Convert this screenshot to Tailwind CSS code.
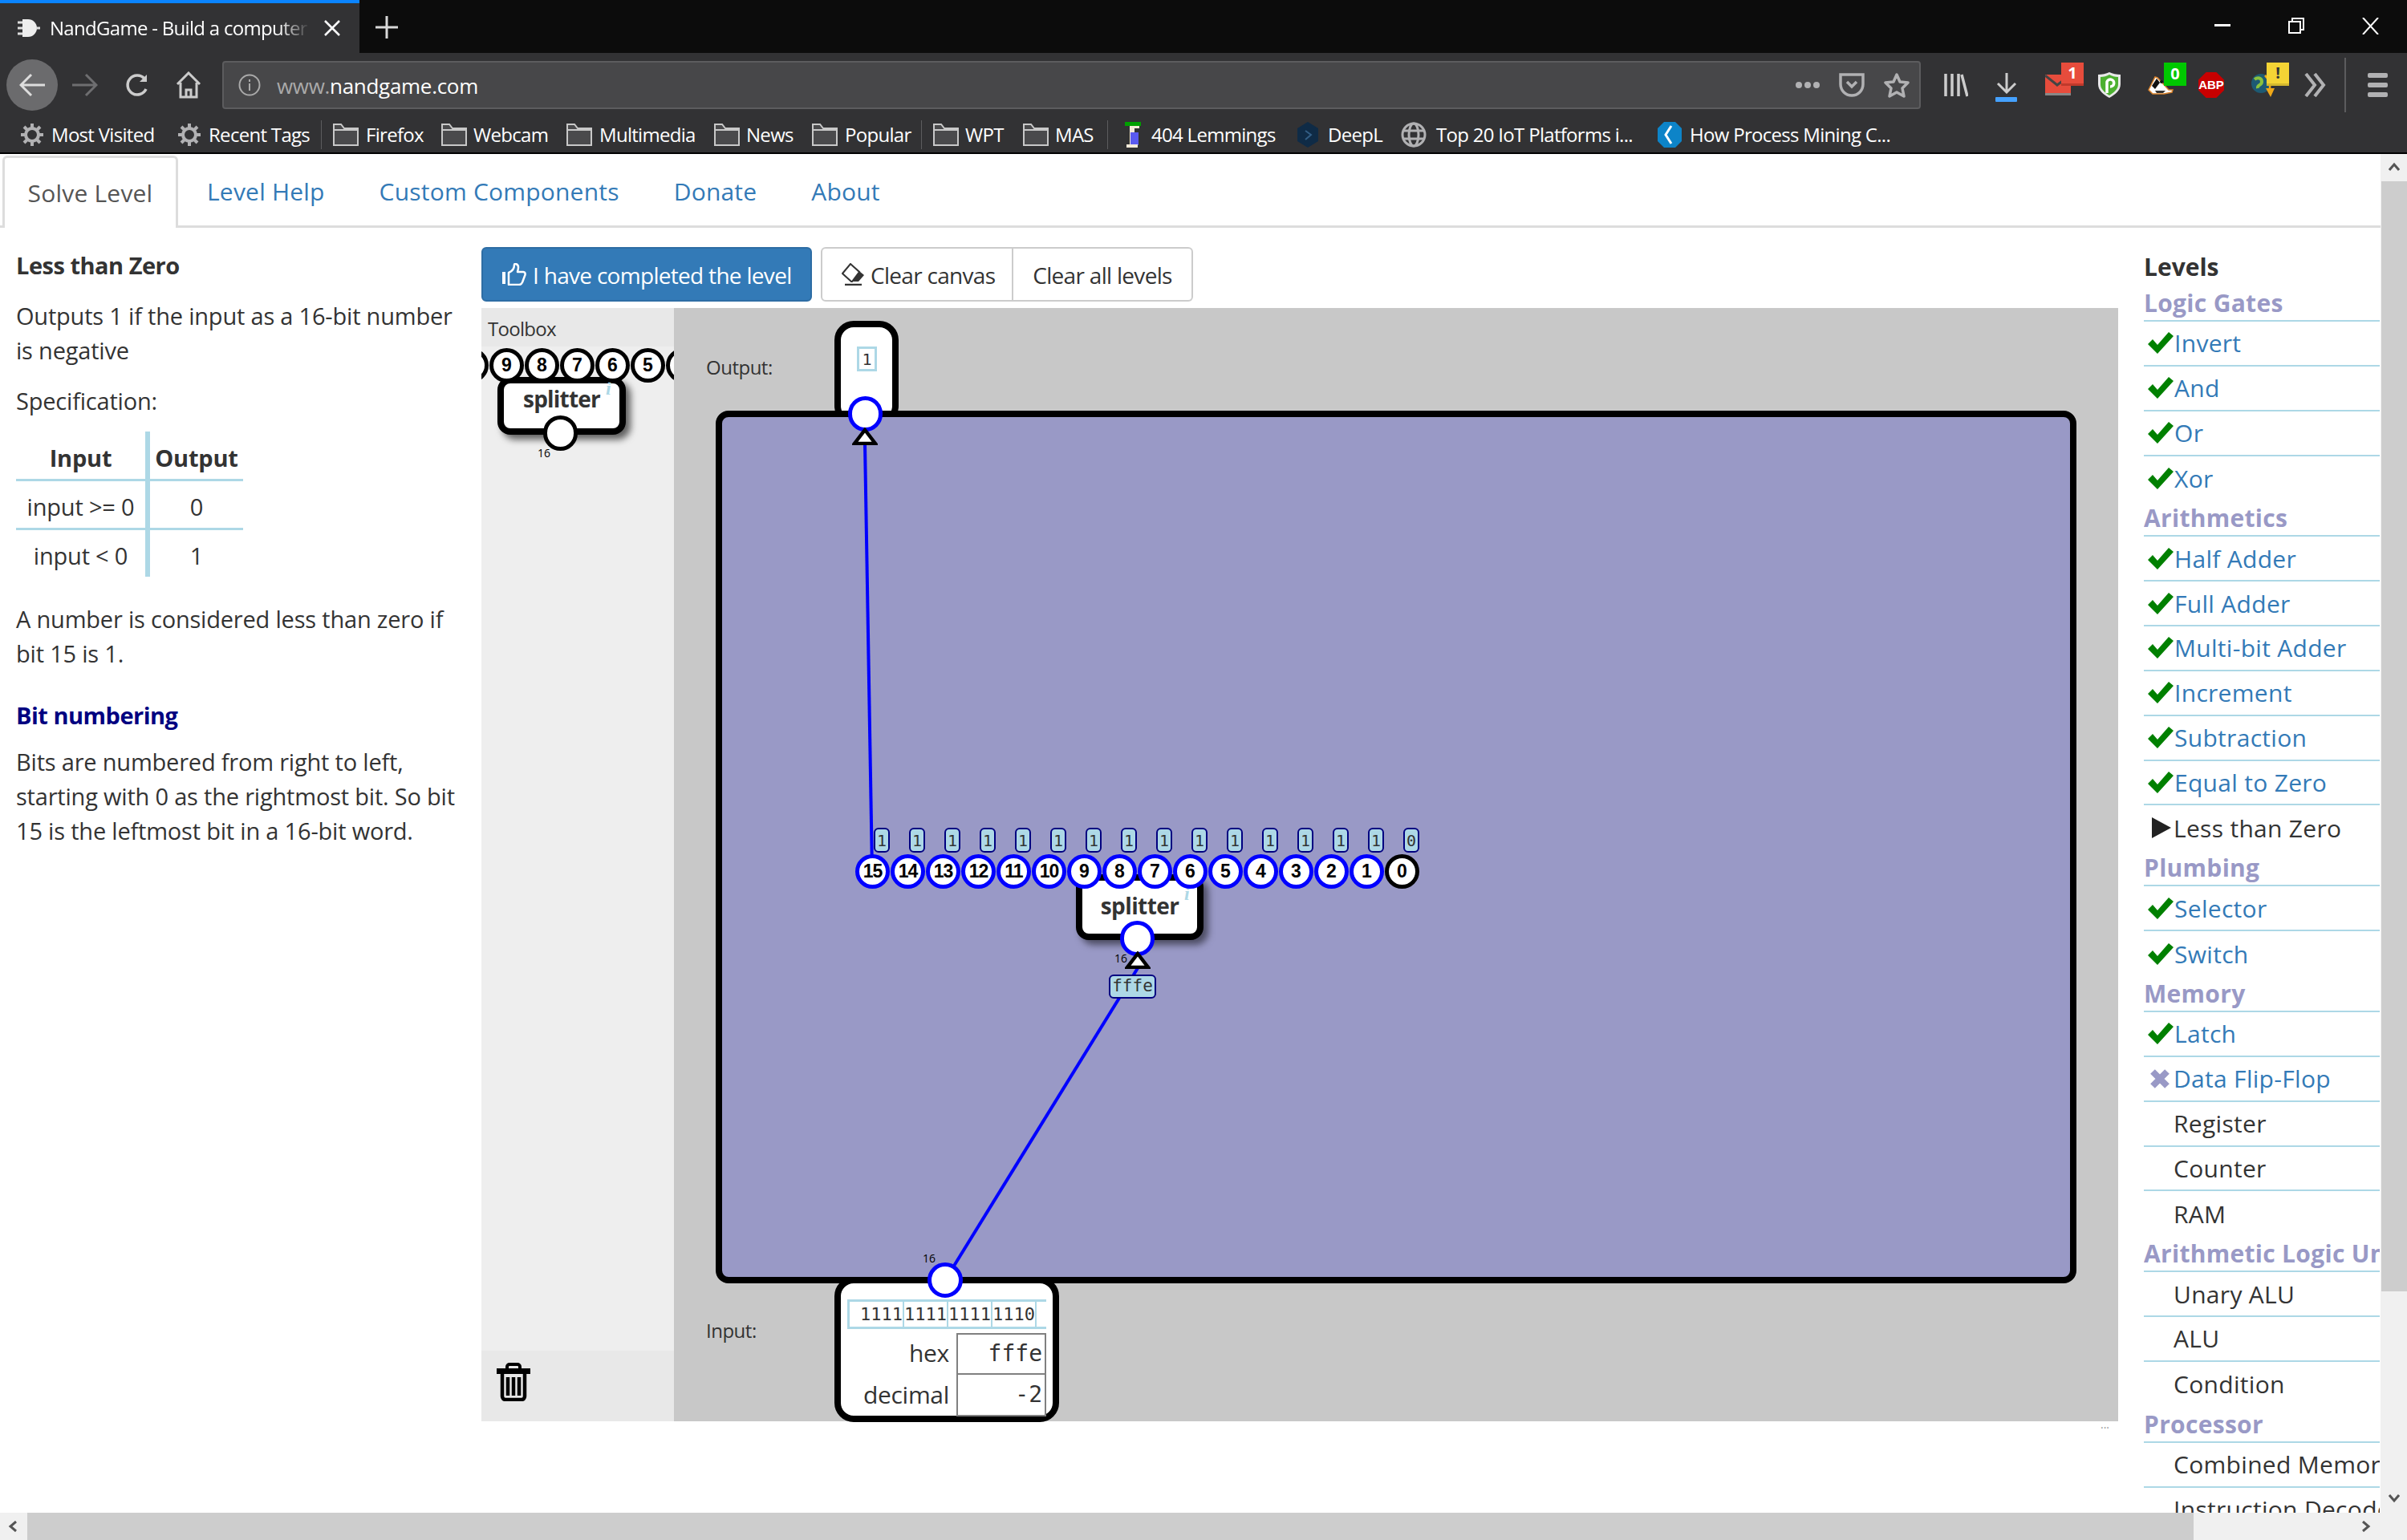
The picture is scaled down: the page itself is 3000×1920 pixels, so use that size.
<!DOCTYPE html>
<html lang="en">
<head>
<meta charset="UTF-8">
<title>NandGame - Build a computer from scratch</title>
<script src="https://cdn.jsdelivr.net/npm/@tailwindcss/browser@4"></script>
</head>
<body class="w-[3000px] h-[1920px] overflow-hidden bg-white font-['Open_Sans',sans-serif] text-[#333]">
<div class="flex flex-col w-[3000px] h-[1920px]">

  <!-- tab strip -->
  <div class="flex h-[66px] bg-[#0c0c0c] text-white shrink-0">
    <div class="w-[448px] bg-[#323234] border-t-4 border-[#0a84ff] flex items-center pl-[20px]">
      <svg class="w-[30px] h-[26px]" viewBox="0 0 30 26"><path d="M2 6h7M2 13h7M2 20h7" stroke="#ddd" stroke-width="3"/><path d="M8 2h7a11 11 0 0 1 0 22h-7z" fill="#eee"/><path d="M25 13h5" stroke="#ddd" stroke-width="3"/></svg>
      <span class="ml-[12px] w-[324px] overflow-hidden whitespace-nowrap text-[24px] tracking-[-0.7px] [mask-image:linear-gradient(to_right,black_88%,transparent)]">NandGame - Build a computer</span>
      <svg class="ml-[18px] w-[20px] h-[20px]" viewBox="0 0 20 20"><path d="M1 1l18 18M19 1L1 19" stroke="#fff" stroke-width="2.5"/></svg>
    </div>
    <svg class="ml-[20px] mt-[20px] w-[28px] h-[28px]" viewBox="0 0 28 28"><path d="M14 0v28M0 14h28" stroke="#d8d8d8" stroke-width="3"/></svg>
    <div class="flex-1"></div>
    <svg class="mt-[30px] mr-[72px] w-[20px] h-[3px]" viewBox="0 0 20 3"><path d="M0 1.5h20" stroke="#fff" stroke-width="3"/></svg>
    <svg class="mt-[22px] mr-[72px] w-[20px] h-[20px]" viewBox="0 0 20 20" fill="none" stroke="#fff" stroke-width="2"><rect x="1" y="5" width="14" height="14"/><path d="M5 5V1h14v14h-4"/></svg>
    <svg class="mt-[22px] mr-[35px] w-[21px] h-[21px]" viewBox="0 0 21 21"><path d="M1 0l19 21M20 0L1 21" stroke="#fff" stroke-width="2"/></svg>
  </div>

  <!-- nav toolbar -->
  <div class="flex items-center h-[80px] bg-[#323234] shrink-0 text-[#b1b1b3]">
    <div class="ml-[8px] w-[64px] h-[64px] rounded-full bg-[#6b6b6d] flex items-center justify-center">
      <svg class="w-[32px] h-[30px]" viewBox="0 0 32 30" fill="none" stroke="#ddd" stroke-width="3"><path d="M32 15H3M15 2L2 15l13 13"/></svg>
    </div>
    <svg class="ml-[18px] w-[32px] h-[30px]" viewBox="0 0 32 30" fill="none" stroke="#6e6e70" stroke-width="3"><path d="M0 15h29M17 2l13 13-13 13"/></svg>
    <svg class="ml-[34px] w-[30px] h-[30px]" viewBox="0 0 30 30" fill="none" stroke="#ccc" stroke-width="3.5"><path d="M26 20a12 12 0 1 1-2-13"/><path d="M27 2v9h-9" fill="#ccc" stroke="none"/></svg>
    <svg class="ml-[33px] w-[32px] h-[34px]" viewBox="0 0 32 34" fill="none" stroke="#ccc" stroke-width="3"><path d="M2 16L16 2l14 14M6 14v18h20V14M13 32v-9h6v9"/></svg>
    <div class="ml-[26px] w-[2117px] h-[60px] bg-[#474749] border-2 border-[#5c5c5e] rounded-[4px] flex items-center pl-[18px]">
      <svg class="w-[28px] h-[28px]" viewBox="0 0 28 28" fill="none" stroke="#aaa" stroke-width="2"><circle cx="14" cy="14" r="12.5"/><path d="M14 12v9M14 7v3"/></svg>
      <span class="ml-[20px] pt-[2px] text-[26px] tracking-[-0.3px] text-[#aaa]">www.<span class="text-white">nandgame.com</span></span>
      <div class="flex-1"></div>
      <div class="flex gap-[3px] mr-[24px]"><div class="w-[8px] h-[8px] rounded-full bg-[#b1b1b3]"></div><div class="w-[8px] h-[8px] rounded-full bg-[#b1b1b3]"></div><div class="w-[8px] h-[8px] rounded-full bg-[#b1b1b3]"></div></div>
      <svg class="w-[32px] h-[30px]" viewBox="0 0 32 30" fill="none" stroke="#b1b1b3" stroke-width="3.5"><path d="M2 2h28v12a14 14 0 0 1-28 0z"/><path d="M10 11l6 6 6-6"/></svg>
      <svg class="ml-[24px] mr-[12px] w-[32px] h-[32px]" viewBox="0 0 32 32" fill="none" stroke="#b1b1b3" stroke-width="3.5" stroke-linejoin="round"><path d="M16 3l4 9 10 1-7 7 2 10-9-5-9 5 2-10-7-7 10-1z"/></svg>
    </div>
    <svg class="ml-[29px] w-[30px] h-[30px]" viewBox="0 0 30 30" stroke="#ccc" stroke-width="3.5"><path d="M2 1v28M10 1v28M18 1v28M22 2l7 27"/></svg>
    <div class="relative ml-[34px] w-[28px] h-[30px]">
      <svg class="w-[28px] h-[26px]" viewBox="0 0 28 26" fill="none" stroke="#ccc" stroke-width="3"><path d="M14 0v24M3 13l11 11 11-11"/></svg>
      <div class="absolute left-0 bottom-[-6px] w-[27px] h-[6px] bg-[#45a1ff] rounded-[1px]"></div>
    </div>
    <div class="relative ml-[34px] w-[32px] h-[26px] bg-[#e74c3c] border-b-[3px] border-[#888]">
      <svg class="absolute top-[0px] left-0 w-[32px] h-[16px]" viewBox="0 0 32 16" fill="none" stroke="#444" stroke-width="3"><path d="M0 1l15 12L32 0"/></svg>
      <div class="absolute top-[-15px] left-[20px] w-[28px] h-[29px] bg-[#e74c3c] border-b-[3px] border-[#c0392b] text-white text-[20px] font-bold leading-[26px] text-center">1</div>
    </div>
    <svg class="ml-[34px] w-[28px] h-[32px]" viewBox="0 0 28 32"><path d="M14 0c4 2 9 3 14 3v12c0 8-7 13-14 17C7 28 0 23 0 15V3c5 0 10-1 14-3z" fill="#e8e8e8"/><path d="M14 3c3 2 7 3 11 3v9c0 6-5 10-11 14C8 25 3 21 3 15V6c4 0 8-1 11-3z" fill="#4cb030"/><path d="M11 26V12a4.500 4.500 0 1 1 4 6" fill="none" stroke="#fff" stroke-width="3.500"/></svg>
    <div class="relative ml-[34px] w-[32px] h-[26px]">
      <svg class="absolute top-0 left-0 w-[32px] h-[26px]" viewBox="0 0 32 26"><path d="M1 19L6 9l3-6 3 1 14 15h5l-1 3-10 2H6z" fill="#fff" stroke="#d9822b" stroke-width="1.500"/><path d="M5 14l6-9 4 5-6 8z" fill="#111"/><path d="M9 20h13l-3 3H11z" fill="#333"/><circle cx="17" cy="9" r="2" fill="#111"/></svg>
      <div class="absolute top-[-15px] left-[20px] w-[28px] h-[29px] bg-[#00c800] text-white text-[20px] font-bold leading-[28px] text-center">0</div>
    </div>
    <div class="ml-[31px] w-[32px] h-[32px] bg-[#c80000] [clip-path:polygon(30%_0,70%_0,100%_30%,100%_70%,70%_100%,30%_100%,0_70%,0_30%)] text-white text-[15px] font-bold flex items-center justify-center font-['Liberation_Sans',sans-serif]">ABP</div>
    <div class="relative ml-[34px] w-[32px] h-[30px]">
      <svg class="absolute left-0 top-0 w-[32px] h-[30px]" viewBox="0 0 32 30"><circle cx="12" cy="13" r="12" fill="#1d5a73"/><path d="M4 8c4-3 9-2 9 3s-6 3-5 8" stroke="#8ac23d" stroke-width="4" fill="none"/><path d="M17 3c5 5 7 10 6 18" stroke="#f0a818" stroke-width="2.500" fill="none"/><path d="M18 19h11l-5 11z" fill="#f0a818"/></svg>
      <div class="absolute top-[-13px] left-[19px] w-[28px] h-[29px] bg-[#f4d435] border-b-[3px] border-[#d4b82e] text-[#333] text-[20px] font-bold leading-[26px] text-center">!</div>
    </div>
    <svg class="ml-[34px] w-[27px] h-[30px]" viewBox="0 0 27 30" fill="none" stroke="#b1b1b3" stroke-width="4"><path d="M2 1l11 14L2 29M13 1l11 14-11 14"/></svg>
    <div class="ml-[23px] w-[2px] h-[68px] bg-[#5c5c5e]"></div>
    <div class="ml-[27px] flex flex-col gap-[6px] w-[25px]"><div class="h-[6px] bg-[#b1b1b3] rounded-[2px]"></div><div class="h-[6px] bg-[#b1b1b3] rounded-[2px]"></div><div class="h-[6px] bg-[#b1b1b3] rounded-[2px]"></div></div>
  </div>

  <!-- bookmarks -->
  <div class="flex items-center h-[44px] bg-[#323234] shrink-0 text-white text-[24px] tracking-[-0.7px] whitespace-nowrap">
    <svg class="ml-[26px] w-[28px] h-[28px]" viewBox="0 0 28 28" fill="none" stroke="#b1b1b3"><circle cx="14" cy="14" r="8" stroke-width="4"/><path d="M14 0v6M14 22v6M0 14h6M22 14h6M4 4l4 4M20 20l4 4M24 4l-4 4M8 20l-4 4" stroke-width="4"/></svg>
    <span class="ml-[10px] w-[132px]">Most Visited</span>
    <svg class="ml-[26px] w-[28px] h-[28px]" viewBox="0 0 28 28" fill="none" stroke="#b1b1b3"><circle cx="14" cy="14" r="8" stroke-width="4"/><path d="M14 0v6M14 22v6M0 14h6M22 14h6M4 4l4 4M20 20l4 4M24 4l-4 4M8 20l-4 4" stroke-width="4"/></svg>
    <span class="ml-[10px] w-[125px]">Recent Tags</span>
    <div class="ml-[15px] w-[1px] h-[36px] bg-[#5c5c5e]"></div>
    <svg class="ml-[14px] w-[32px] h-[28px]" viewBox="0 0 32 28" fill="#4a4a4c" stroke="#c8c8c8" stroke-width="2"><path d="M1 27V1h9l4 5h17v21z"/><path d="M1 8h30" fill="none"/></svg>
    <span class="ml-[9px] w-[71px]">Firefox</span>
    <svg class="ml-[23px] w-[32px] h-[28px]" viewBox="0 0 32 28" fill="#4a4a4c" stroke="#c8c8c8" stroke-width="2"><path d="M1 27V1h9l4 5h17v21z"/><path d="M1 8h30" fill="none"/></svg>
    <span class="ml-[8px] w-[92px]">Webcam</span>
    <svg class="ml-[24px] w-[32px] h-[28px]" viewBox="0 0 32 28" fill="#4a4a4c" stroke="#c8c8c8" stroke-width="2"><path d="M1 27V1h9l4 5h17v21z"/><path d="M1 8h30" fill="none"/></svg>
    <span class="ml-[9px] w-[119px]">Multimedia</span>
    <svg class="ml-[24px] w-[32px] h-[28px]" viewBox="0 0 32 28" fill="#4a4a4c" stroke="#c8c8c8" stroke-width="2"><path d="M1 27V1h9l4 5h17v21z"/><path d="M1 8h30" fill="none"/></svg>
    <span class="ml-[8px] w-[59px]">News</span>
    <svg class="ml-[23px] w-[32px] h-[28px]" viewBox="0 0 32 28" fill="#4a4a4c" stroke="#c8c8c8" stroke-width="2"><path d="M1 27V1h9l4 5h17v21z"/><path d="M1 8h30" fill="none"/></svg>
    <span class="ml-[9px] w-[81px]">Popular</span>
    <div class="ml-[14px] w-[1px] h-[36px] bg-[#5c5c5e]"></div>
    <svg class="ml-[14px] w-[32px] h-[28px]" viewBox="0 0 32 28" fill="#4a4a4c" stroke="#c8c8c8" stroke-width="2"><path d="M1 27V1h9l4 5h17v21z"/><path d="M1 8h30" fill="none"/></svg>
    <span class="ml-[8px] w-[49px]">WPT</span>
    <svg class="ml-[23px] w-[32px] h-[28px]" viewBox="0 0 32 28" fill="#4a4a4c" stroke="#c8c8c8" stroke-width="2"><path d="M1 27V1h9l4 5h17v21z"/><path d="M1 8h30" fill="none"/></svg>
    <span class="ml-[8px] w-[50px]">MAS</span>
    <div class="ml-[15px] w-[1px] h-[36px] bg-[#5c5c5e]"></div>
    <svg class="ml-[19px] w-[24px] h-[32px]" viewBox="0 0 24 32"><rect x="2" width="20" height="5" fill="#00a000"/><rect x="8" y="5" width="6" height="24" fill="#f4ead8"/><rect x="14" y="5" width="6" height="3" fill="#f4ead8"/><rect x="9" y="13" width="10" height="16" fill="#5a5af0"/><rect x="4" y="28" width="14" height="4" fill="#f4ead8"/></svg>
    <span class="ml-[11px] w-[156px]">404 Lemmings</span>
    <svg class="ml-[26px] w-[26px] h-[32px]" viewBox="0 0 26 32"><path d="M13 0l13 8v16l-13 8-13-8V8z" fill="#0f2b46"/><path d="M10 11l7 5-7 6" fill="none" stroke="#335e85" stroke-width="2"/></svg>
    <span class="ml-[12px] w-[67px]">DeepL</span>
    <svg class="ml-[24px] w-[32px] h-[32px]" viewBox="0 0 32 32" fill="none" stroke="#b1b1b3" stroke-width="3"><circle cx="16" cy="16" r="14"/><ellipse cx="16" cy="16" rx="6" ry="14"/><path d="M3 11h26M3 21h26"/></svg>
    <span class="ml-[12px] w-[247px]">Top 20 IoT Platforms i...</span>
    <svg class="ml-[29px] w-[30px] h-[32px]" viewBox="0 0 30 32"><path d="M8 0h14l8 8v16l-8 8H8l-8-8V8z" fill="#0d84c8"/><path d="M17 5l-7 11 7 11" fill="none" stroke="#fff" stroke-width="3"/></svg>
    <span class="ml-[10px]">How Process Mining C...</span>
  </div>
  <div class="h-[2px] bg-black shrink-0"></div>

  <!-- page with scrollbars -->
  <div class="flex flex-1 min-h-0">
    <div class="flex flex-col flex-1 min-w-0">
      <div class="flex-1 min-h-0 overflow-hidden">

        <!-- page tabs -->
        <div class="flex h-[92px] pl-[3px] pt-[2px] border-b-[3px] border-[#ddd] text-[#337ab7] text-[30px] tracking-[0.2px]">
          <div class="w-[219px] h-[90px] border-[3px] border-b-0 border-[#ddd] rounded-t-[6px] bg-white text-[#555] flex items-center justify-center">Solve Level</div>
          <div class="ml-[36px] h-[87px] flex items-center pt-[2px]">Level Help</div>
          <div class="ml-[68px] h-[87px] flex items-center pt-[2px]">Custom Components</div>
          <div class="ml-[68px] h-[87px] flex items-center pt-[2px]">Donate</div>
          <div class="ml-[68px] h-[87px] flex items-center pt-[2px]">About</div>
        </div>

        <div class="flex">
          <!-- left text column -->
          <div class="w-[600px] pl-[20px] pr-[20px] pt-[27px] text-[29px] leading-[43px] tracking-[-0.2px]">
            <h2 class="font-bold h-[40px] leading-[40px] mb-[21px] tracking-[-0.5px]">Less than Zero</h2>
            <p class="mb-[20px]">Outputs 1 if the input as a 16-bit number<br>is negative</p>
            <p class="mb-[17px]">Specification:</p>
            <table class="border-collapse mb-[31px]">
              <tr class="h-[60px]">
                <th class="w-[164px] pt-[6px] border-b-[3px] border-r-[6px] border-[#add8e6] font-bold">Input</th>
                <th class="w-[119px] pt-[6px] border-b-[3px] border-[#add8e6] font-bold">Output</th>
              </tr>
              <tr class="h-[61px]">
                <td class="text-center pt-[5px] border-b-[3px] border-r-[6px] border-[#add8e6]">input &gt;= 0</td>
                <td class="text-center pt-[5px] border-b-[3px] border-[#add8e6]">0</td>
              </tr>
              <tr class="h-[60px]">
                <td class="text-center pt-[5px] border-r-[6px] border-[#add8e6]">input &lt; 0</td>
                <td class="text-center pt-[5px]">1</td>
              </tr>
            </table>
            <p class="mb-[36px]">A number is considered less than zero if<br>bit 15 is 1.</p>
            <h3 class="font-bold text-[#000080] h-[40px] leading-[40px] mb-[16px] tracking-[-0.5px]">Bit numbering</h3>
            <p>Bits are numbered from right to left,<br>starting with 0 as the rightmost bit. So bit<br>15 is the leftmost bit in a 16-bit word.</p>
          </div>

          <!-- center column -->
          <div class="w-[2040px] pt-[24px]">
            <div class="flex h-[68px] text-[28px] tracking-[-0.7px]">
              <button class="w-[412px] rounded-[6px] bg-[#337ab7] border-2 border-[#2e6da4] text-white flex items-center pl-[24px] pt-[2px]">
                <svg class="w-[30px] h-[28px] mr-[8px] mb-[2px]" viewBox="0 0 30 28" fill="none" stroke="#fff" stroke-width="2.500" stroke-linejoin="round"><path d="M2 11v15" stroke-width="4"/><path d="M8 12c5-2 7-5 7-10 0-2 5-1 5 3 0 3-1 5-1 6h7c3 0 3 3 2 5l-3 8c-1 2-2 3-4 3H8z"/></svg>
                I have completed the level
              </button>
              <button class="ml-[11px] w-[240px] rounded-l-[6px] border-2 border-[#ccc] flex items-center pl-[24px] pt-[2px]">
                <svg class="w-[30px] h-[28px] mr-[6px] mb-[2px]" viewBox="0 0 30 28"><path d="M11 1l17 14-7 8H12L1 13z" fill="#333"/><path d="M1 13L11 1l11 10-9 12h-1z" fill="#fff" stroke="#333" stroke-width="2"/><path d="M4 27h21" stroke="#333" stroke-width="2.500"/></svg>
                Clear canvas
              </button>
              <button class="w-[224px] rounded-r-[6px] border-2 border-l-0 border-[#ccc] pt-[2px]">Clear all levels</button>
            </div>

            <!-- canvas -->
            <div class="mt-[8px] flex h-[1388px] relative">
              <!-- toolbox -->
              <div class="w-[240px] flex flex-col bg-[#eee]">
                <div class="h-[48px] bg-[#e8e8e8] pl-[8px] text-[24px] leading-[52px] tracking-[-0.7px]">Toolbox</div>
                <div class="flex-1 relative overflow-hidden">
                  <div class="absolute left-[20px] top-[38px] w-[160px] h-[72px] bg-white border-[8px] border-black rounded-[16px] shadow-[6px_6px_8px_rgba(0,0,0,0.6)] text-center font-bold text-[28px] leading-[38px] tracking-[-0.8px]">splitter</div>
                  <span class="absolute left-[155px] top-[38px] text-[#add8e6] font-['Liberation_Serif',serif] italic font-bold text-[24px] leading-[28px]">i</span>
                  <div class="absolute left-[-34px] top-[2px] flex gap-[1px]">
                    <div class="w-[43px] h-[43px] rounded-full bg-white border-[5px] border-black flex items-center justify-center font-['Liberation_Sans',sans-serif] font-bold text-[23px] tracking-[-1px] text-black">10</div>
                    <div class="w-[43px] h-[43px] rounded-full bg-white border-[5px] border-black flex items-center justify-center font-['Liberation_Sans',sans-serif] font-bold text-[23px] text-black">9</div>
                    <div class="w-[43px] h-[43px] rounded-full bg-white border-[5px] border-black flex items-center justify-center font-['Liberation_Sans',sans-serif] font-bold text-[23px] text-black">8</div>
                    <div class="w-[43px] h-[43px] rounded-full bg-white border-[5px] border-black flex items-center justify-center font-['Liberation_Sans',sans-serif] font-bold text-[23px] text-black">7</div>
                    <div class="w-[43px] h-[43px] rounded-full bg-white border-[5px] border-black flex items-center justify-center font-['Liberation_Sans',sans-serif] font-bold text-[23px] text-black">6</div>
                    <div class="w-[43px] h-[43px] rounded-full bg-white border-[5px] border-black flex items-center justify-center font-['Liberation_Sans',sans-serif] font-bold text-[23px] text-black">5</div>
                    <div class="w-[43px] h-[43px] rounded-full bg-white border-[5px] border-black flex items-center justify-center font-['Liberation_Sans',sans-serif] font-bold text-[23px] text-black">4</div>
                  </div>
                  <div class="absolute left-[77px] top-[86px] w-[43px] h-[44px] rounded-full bg-white border-[5px] border-black"></div>
                  <span class="absolute left-[70px] top-[124px] text-[14px] leading-[18px] text-black">16</span>
                </div>
                <div class="h-[88px] bg-[#e8e8e8] flex items-start pl-[19px] pt-[15px]">
                  <svg class="w-[42px] h-[48px]" viewBox="0 0 42 48" fill="none" stroke="#000"><path d="M0 10.500h42" stroke-width="7"/><path d="M13 8V5a3 3 0 0 1 3-3h10a3 3 0 0 1 3 3v3" stroke-width="4"/><path d="M7 13v29a4 4 0 0 0 4 4h20a4 4 0 0 0 4-4V13" stroke-width="4.500"/><path d="M14 18v23M21 18v23M28 18v23" stroke-width="4.500"/></svg>
                </div>
              </div>

              <!-- board -->
              <div class="w-[1800px] bg-[#c8c8c8] relative">
                <span class="absolute left-[40px] top-[60px] text-[24px] leading-[28px] tracking-[-0.5px]">Output:</span>
                <span class="absolute left-[40px] top-[1261px] text-[24px] leading-[28px] tracking-[-0.5px]">Input:</span>

                <!-- output box -->
                <div class="absolute left-[200px] top-[16px] w-[80px] h-[130px] bg-white border-[8px] border-black rounded-[24px]"></div>
                <div class="absolute left-[228px] top-[48px] w-[25px] h-[31px] border-[3px] border-[#add8e6] flex items-center justify-center font-['DejaVu_Sans_Mono',monospace] text-[20px]">1</div>

                <div class="absolute left-[52px] top-[128px] w-[1696px] h-[1088px] bg-[#9999c6] border-[8px] border-black rounded-[16px]"></div>

                <!-- input box -->
                <div class="absolute left-[200px] top-[1208px] w-[280px] h-[181px] bg-white border-[8px] border-black rounded-[24px] pt-[20px] px-[8px]">
                  <div class="flex h-[37px] border-[3px] border-r-0 border-[#add8e6] pl-[13px] font-['DejaVu_Sans_Mono',monospace] text-[22px] leading-[31px]">
                    <span class="w-[55px] border-r-2 border-[#add8e6]">1111</span>
                    <span class="w-[55px] border-r-2 border-[#add8e6]">1111</span>
                    <span class="w-[55px] border-r-2 border-[#add8e6]">1111</span>
                    <span class="w-[55px] border-r-2 border-[#add8e6]">1110</span>
                  </div>
                  <div class="flex mt-[5px] h-[52px]">
                    <span class="w-[127px] text-right text-[30px] leading-[50px] tracking-[-0.3px]">hex</span>
                    <span class="ml-[9px] w-[112px] border-2 border-[#808080] text-right pr-[3px] font-['DejaVu_Sans_Mono',monospace] text-[28px] leading-[48px]">fffe</span>
                  </div>
                  <div class="flex h-[52px]">
                    <span class="w-[127px] text-right text-[30px] leading-[50px] tracking-[-0.3px]">decimal</span>
                    <span class="ml-[9px] w-[112px] border-2 border-t-0 border-[#808080] text-right pr-[3px] font-['DejaVu_Sans_Mono',monospace] text-[28px] leading-[50px]">-2</span>
                  </div>
                </div>

                <!-- wires -->
                <svg class="absolute left-0 top-0 w-[1800px] h-[1388px]" viewBox="0 0 1800 1388" stroke="#0000ff" stroke-width="4"><path d="M247 702L238 169"/><path d="M338 1212L578 823"/></svg>

                <!-- output connector -->
                <div class="absolute left-[217px] top-[110px] w-[43px] h-[44px] rounded-full bg-white border-[5px] border-[#0000ff]"></div>
                <svg class="absolute left-[222px] top-[149px] w-[32px] h-[22px]" viewBox="0 0 32 22"><path d="M16 3L29 20H3z" fill="#fff" stroke="#000" stroke-width="4.500"/></svg>

                <!-- splitter -->
                <div class="absolute left-[501px] top-[706px] w-[159px] h-[82px] bg-white border-[8px] border-black rounded-[16px] shadow-[6px_6px_8px_rgba(0,0,0,0.5)] text-center font-bold text-[28px] leading-[38px] pt-[12px] tracking-[-0.6px]">splitter</div>
                <span class="absolute left-[636px] top-[716px] text-[#add8e6] font-['Liberation_Serif',serif] italic font-bold text-[24px] leading-[28px]">i</span>

                <!-- bit values -->
                <div class="absolute left-[249px] top-[648px] flex gap-[24px] font-['DejaVu_Sans_Mono',monospace] text-[20px]">
                  <div class="w-[20px] h-[31px] bg-[#add8e6] border-2 border-[#000080] rounded-[6px] flex items-center justify-center">1</div>
                  <div class="w-[20px] h-[31px] bg-[#add8e6] border-2 border-[#000080] rounded-[6px] flex items-center justify-center">1</div>
                  <div class="w-[20px] h-[31px] bg-[#add8e6] border-2 border-[#000080] rounded-[6px] flex items-center justify-center">1</div>
                  <div class="w-[20px] h-[31px] bg-[#add8e6] border-2 border-[#000080] rounded-[6px] flex items-center justify-center">1</div>
                  <div class="w-[20px] h-[31px] bg-[#add8e6] border-2 border-[#000080] rounded-[6px] flex items-center justify-center">1</div>
                  <div class="w-[20px] h-[31px] bg-[#add8e6] border-2 border-[#000080] rounded-[6px] flex items-center justify-center">1</div>
                  <div class="w-[20px] h-[31px] bg-[#add8e6] border-2 border-[#000080] rounded-[6px] flex items-center justify-center">1</div>
                  <div class="w-[20px] h-[31px] bg-[#add8e6] border-2 border-[#000080] rounded-[6px] flex items-center justify-center">1</div>
                  <div class="w-[20px] h-[31px] bg-[#add8e6] border-2 border-[#000080] rounded-[6px] flex items-center justify-center">1</div>
                  <div class="w-[20px] h-[31px] bg-[#add8e6] border-2 border-[#000080] rounded-[6px] flex items-center justify-center">1</div>
                  <div class="w-[20px] h-[31px] bg-[#add8e6] border-2 border-[#000080] rounded-[6px] flex items-center justify-center">1</div>
                  <div class="w-[20px] h-[31px] bg-[#add8e6] border-2 border-[#000080] rounded-[6px] flex items-center justify-center">1</div>
                  <div class="w-[20px] h-[31px] bg-[#add8e6] border-2 border-[#000080] rounded-[6px] flex items-center justify-center">1</div>
                  <div class="w-[20px] h-[31px] bg-[#add8e6] border-2 border-[#000080] rounded-[6px] flex items-center justify-center">1</div>
                  <div class="w-[20px] h-[31px] bg-[#add8e6] border-2 border-[#000080] rounded-[6px] flex items-center justify-center">1</div>
                  <div class="w-[20px] h-[31px] bg-[#add8e6] border-2 border-[#000080] rounded-[6px] flex items-center justify-center">0</div>
                </div>

                <!-- bit pins -->
                <div class="absolute left-[226px] top-[681px] flex gap-[1px] font-['Liberation_Sans',sans-serif] font-bold text-[23px] text-black">
                  <div class="w-[43px] h-[43px] rounded-full bg-white border-[5px] border-[#0000ff] flex items-center justify-center tracking-[-1px]">15</div>
                  <div class="w-[43px] h-[43px] rounded-full bg-white border-[5px] border-[#0000ff] flex items-center justify-center tracking-[-1px]">14</div>
                  <div class="w-[43px] h-[43px] rounded-full bg-white border-[5px] border-[#0000ff] flex items-center justify-center tracking-[-1px]">13</div>
                  <div class="w-[43px] h-[43px] rounded-full bg-white border-[5px] border-[#0000ff] flex items-center justify-center tracking-[-1px]">12</div>
                  <div class="w-[43px] h-[43px] rounded-full bg-white border-[5px] border-[#0000ff] flex items-center justify-center tracking-[-1px]">11</div>
                  <div class="w-[43px] h-[43px] rounded-full bg-white border-[5px] border-[#0000ff] flex items-center justify-center tracking-[-1px]">10</div>
                  <div class="w-[43px] h-[43px] rounded-full bg-white border-[5px] border-[#0000ff] flex items-center justify-center">9</div>
                  <div class="w-[43px] h-[43px] rounded-full bg-white border-[5px] border-[#0000ff] flex items-center justify-center">8</div>
                  <div class="w-[43px] h-[43px] rounded-full bg-white border-[5px] border-[#0000ff] flex items-center justify-center">7</div>
                  <div class="w-[43px] h-[43px] rounded-full bg-white border-[5px] border-[#0000ff] flex items-center justify-center">6</div>
                  <div class="w-[43px] h-[43px] rounded-full bg-white border-[5px] border-[#0000ff] flex items-center justify-center">5</div>
                  <div class="w-[43px] h-[43px] rounded-full bg-white border-[5px] border-[#0000ff] flex items-center justify-center">4</div>
                  <div class="w-[43px] h-[43px] rounded-full bg-white border-[5px] border-[#0000ff] flex items-center justify-center">3</div>
                  <div class="w-[43px] h-[43px] rounded-full bg-white border-[5px] border-[#0000ff] flex items-center justify-center">2</div>
                  <div class="w-[43px] h-[43px] rounded-full bg-white border-[5px] border-[#0000ff] flex items-center justify-center">1</div>
                  <div class="w-[43px] h-[43px] rounded-full bg-white border-[5px] border-black flex items-center justify-center">0</div>
                </div>

                <!-- splitter input -->
                <div class="absolute left-[556px] top-[764px] w-[43px] h-[44px] rounded-full bg-white border-[5px] border-[#0000ff]"></div>
                <svg class="absolute left-[562px] top-[802px] w-[32px] h-[22px]" viewBox="0 0 32 22"><path d="M16 3L29 20H3z" fill="#fff" stroke="#000" stroke-width="4.500"/></svg>
                <span class="absolute left-[549px] top-[802px] text-[14px] leading-[18px] text-black">16</span>
                <div class="absolute left-[542px] top-[831px] w-[59px] h-[30px] bg-[#add8e6] border-2 border-[#000080] rounded-[6px] flex items-center justify-center font-['DejaVu_Sans_Mono',monospace] text-[21px]">fffe</div>

                <!-- board input -->
                <div class="absolute left-[316px] top-[1190px] w-[44px] h-[44px] rounded-full bg-white border-[5px] border-[#0000ff]"></div>
                <span class="absolute left-[310px] top-[1176px] text-[14px] leading-[18px] text-black">16</span>
              </div>
              <span class="absolute left-[2018px] top-[1387px] text-[14px] leading-[10px] text-[#999]">...</span>
            </div>
          </div>

          <!-- levels -->
          <div class="ml-[32px] w-[294px] pt-[29px] overflow-hidden whitespace-nowrap text-[30px] tracking-[0.3px]">
            <h3 class="h-[43px] leading-[40px] font-bold tracking-normal">Levels</h3>
            <h4 class="h-[45px] leading-[44px] font-bold text-[#9999c6] border-b-2 border-[#add8e6]">Logic Gates</h4>
            <a class="flex items-center h-[55.85px] border-b-2 border-[#add8e6] text-[#337ab7]"><svg class="ml-[5px] mr-[1px] w-[32px] h-[27px] shrink-0" viewBox="0 0 32 27"><path d="M0 15l12 12L32 5l-6-5-14 16-6-7z" fill="#008000"/></svg>Invert</a>
            <a class="flex items-center h-[55.85px] border-b-2 border-[#add8e6] text-[#337ab7]"><svg class="ml-[5px] mr-[1px] w-[32px] h-[27px] shrink-0" viewBox="0 0 32 27"><path d="M0 15l12 12L32 5l-6-5-14 16-6-7z" fill="#008000"/></svg>And</a>
            <a class="flex items-center h-[55.85px] border-b-2 border-[#add8e6] text-[#337ab7]"><svg class="ml-[5px] mr-[1px] w-[32px] h-[27px] shrink-0" viewBox="0 0 32 27"><path d="M0 15l12 12L32 5l-6-5-14 16-6-7z" fill="#008000"/></svg>Or</a>
            <a class="flex items-center h-[55.85px] text-[#337ab7]"><svg class="ml-[5px] mr-[1px] w-[32px] h-[27px] shrink-0" viewBox="0 0 32 27"><path d="M0 15l12 12L32 5l-6-5-14 16-6-7z" fill="#008000"/></svg>Xor</a>
            <h4 class="h-[45px] leading-[44px] font-bold text-[#9999c6] border-b-2 border-[#add8e6]">Arithmetics</h4>
            <a class="flex items-center h-[55.85px] border-b-2 border-[#add8e6] text-[#337ab7]"><svg class="ml-[5px] mr-[1px] w-[32px] h-[27px] shrink-0" viewBox="0 0 32 27"><path d="M0 15l12 12L32 5l-6-5-14 16-6-7z" fill="#008000"/></svg>Half Adder</a>
            <a class="flex items-center h-[55.85px] border-b-2 border-[#add8e6] text-[#337ab7]"><svg class="ml-[5px] mr-[1px] w-[32px] h-[27px] shrink-0" viewBox="0 0 32 27"><path d="M0 15l12 12L32 5l-6-5-14 16-6-7z" fill="#008000"/></svg>Full Adder</a>
            <a class="flex items-center h-[55.85px] border-b-2 border-[#add8e6] text-[#337ab7]"><svg class="ml-[5px] mr-[1px] w-[32px] h-[27px] shrink-0" viewBox="0 0 32 27"><path d="M0 15l12 12L32 5l-6-5-14 16-6-7z" fill="#008000"/></svg>Multi-bit Adder</a>
            <a class="flex items-center h-[55.85px] border-b-2 border-[#add8e6] text-[#337ab7]"><svg class="ml-[5px] mr-[1px] w-[32px] h-[27px] shrink-0" viewBox="0 0 32 27"><path d="M0 15l12 12L32 5l-6-5-14 16-6-7z" fill="#008000"/></svg>Increment</a>
            <a class="flex items-center h-[55.85px] border-b-2 border-[#add8e6] text-[#337ab7]"><svg class="ml-[5px] mr-[1px] w-[32px] h-[27px] shrink-0" viewBox="0 0 32 27"><path d="M0 15l12 12L32 5l-6-5-14 16-6-7z" fill="#008000"/></svg>Subtraction</a>
            <a class="flex items-center h-[55.85px] border-b-2 border-[#add8e6] text-[#337ab7]"><svg class="ml-[5px] mr-[1px] w-[32px] h-[27px] shrink-0" viewBox="0 0 32 27"><path d="M0 15l12 12L32 5l-6-5-14 16-6-7z" fill="#008000"/></svg>Equal to Zero</a>
            <a class="flex items-center h-[55.85px]"><svg class="ml-[10px] mr-[3px] w-[24px] h-[26px] shrink-0" viewBox="0 0 24 26"><path d="M0 0l24 13L0 26z" fill="#222"/></svg>Less than Zero</a>
            <h4 class="h-[45px] leading-[44px] font-bold text-[#9999c6] border-b-2 border-[#add8e6]">Plumbing</h4>
            <a class="flex items-center h-[55.85px] border-b-2 border-[#add8e6] text-[#337ab7]"><svg class="ml-[5px] mr-[1px] w-[32px] h-[27px] shrink-0" viewBox="0 0 32 27"><path d="M0 15l12 12L32 5l-6-5-14 16-6-7z" fill="#008000"/></svg>Selector</a>
            <a class="flex items-center h-[55.85px] text-[#337ab7]"><svg class="ml-[5px] mr-[1px] w-[32px] h-[27px] shrink-0" viewBox="0 0 32 27"><path d="M0 15l12 12L32 5l-6-5-14 16-6-7z" fill="#008000"/></svg>Switch</a>
            <h4 class="h-[45px] leading-[44px] font-bold text-[#9999c6] border-b-2 border-[#add8e6]">Memory</h4>
            <a class="flex items-center h-[55.85px] border-b-2 border-[#add8e6] text-[#337ab7]"><svg class="ml-[5px] mr-[1px] w-[32px] h-[27px] shrink-0" viewBox="0 0 32 27"><path d="M0 15l12 12L32 5l-6-5-14 16-6-7z" fill="#008000"/></svg>Latch</a>
            <a class="flex items-center h-[55.85px] border-b-2 border-[#add8e6] text-[#337ab7]"><svg class="ml-[7px] mr-[4px] w-[26px] h-[26px] shrink-0" viewBox="0 0 26 26"><path d="M4 4l18 18M22 4L4 22" stroke="#9999c6" stroke-width="8"/></svg>Data Flip-Flop</a>
            <a class="flex items-center h-[55.85px] border-b-2 border-[#add8e6] pl-[37px]">Register</a>
            <a class="flex items-center h-[55.85px] border-b-2 border-[#add8e6] pl-[37px]">Counter</a>
            <a class="flex items-center h-[55.85px] pl-[37px]">RAM</a>
            <h4 class="h-[45px] leading-[44px] font-bold text-[#9999c6] border-b-2 border-[#add8e6]">Arithmetic Logic Unit</h4>
            <a class="flex items-center h-[55.85px] border-b-2 border-[#add8e6] pl-[37px]">Unary ALU</a>
            <a class="flex items-center h-[55.85px] border-b-2 border-[#add8e6] pl-[37px]">ALU</a>
            <a class="flex items-center h-[55.85px] pl-[37px]">Condition</a>
            <h4 class="h-[45px] leading-[44px] font-bold text-[#9999c6] border-b-2 border-[#add8e6]">Processor</h4>
            <a class="flex items-center h-[55.85px] border-b-2 border-[#add8e6] pl-[37px]">Combined Memory</a>
            <a class="flex items-center h-[55.85px] border-b-2 border-[#add8e6] pl-[37px]">Instruction Decoder</a>
          </div>
        </div>
      </div>

      <!-- horizontal scrollbar -->
      <div class="flex items-center h-[34px] shrink-0 bg-[#f0f0f0]">
        <svg class="ml-[10px] w-[14px] h-[14px]" viewBox="0 0 14 14" fill="none" stroke="#555" stroke-width="3"><path d="M10 1L3 7l7 6"/></svg>
        <div class="ml-[10px] w-[2700px] h-[34px] bg-[#cdcdcd]"></div>
        <div class="flex-1"></div>
        <svg class="mr-[12px] w-[14px] h-[14px]" viewBox="0 0 14 14" fill="none" stroke="#555" stroke-width="3"><path d="M4 1l7 6-7 6"/></svg>
      </div>
    </div>

    <!-- vertical scrollbar -->
    <div class="w-[33px] shrink-0 flex flex-col items-center bg-[#f0f0f0]">
      <div class="h-[34px] flex items-center"><svg class="w-[14px] h-[14px]" viewBox="0 0 14 14" fill="none" stroke="#555" stroke-width="3"><path d="M1 10l6-7 6 7"/></svg></div>
      <div class="w-[32px] h-[1384px] bg-[#cdcdcd]"></div>
      <div class="flex-1"></div>
      <div class="h-[70px] pt-[10px]"><svg class="w-[14px] h-[14px]" viewBox="0 0 14 14" fill="none" stroke="#555" stroke-width="3"><path d="M1 4l6 7 6-7"/></svg></div>
    </div>
  </div>
</div>
</body>
</html>
